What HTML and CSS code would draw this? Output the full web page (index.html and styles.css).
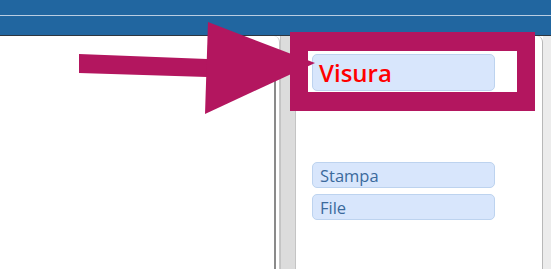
FILE: index.html
```html
<!DOCTYPE html>
<html lang="it">
<head>
  <meta charset="UTF-8" />
  <meta name="viewport" content="width=device-width, initial-scale=1.0"/>
  <title>Visura</title>
  <link rel="stylesheet" href="styles.css">
</head>
<body>
  <div class="header">
    <div class="header-top"></div>
    <div class="header-bottom"></div>
  </div>

  <div class="main">
    <div class="left-panel">
      <div class="scroll-line"></div>
    </div>
    <div class="side-strip"></div>
    <div class="right-panel">
      <button class="btn btn-big">Visura</button>
      <div class="btn-list">
        <button class="btn">Stampa</button>
        <button class="btn">File</button>
      </div>
    </div>
    <div class="edge"></div>
  </div>

  <svg class="annotation" width="551" height="269" viewBox="0 0 551 269">
    <polygon points="79,54 207,59 207,77 79,73" />
    <polygon points="208,22 315,63 205,114" />
    <path fill-rule="evenodd" d="M290 32 H535 V111 H290 Z M308 51 V92 H517 V51 Z" />
  </svg>
</body>
</html>
```

FILE: styles.css
```css
body {
  margin: 0;
  width: 551px;
  height: 269px;
  overflow: hidden;
  position: relative;
  font-family: "Open Sans", Arial, sans-serif;
  background: #fff;
}
.header {
  height: 35px;
  background: #2166a0;
  border-bottom: 1px solid #2d3640;
  display: flex;
  flex-direction: column;
}
.header-top {
  height: 15px;
  border-bottom: 1px solid #b9cde2;
}
.header-bottom {
  flex: 1;
}
.main {
  display: flex;
  height: 233px;
}
.left-panel {
  width: 280px;
  background: #fff;
  border-right: 1px solid #c8c8c8;
  border-top-right-radius: 6px;
  display: flex;
  justify-content: flex-end;
  padding-top: 16px;
  box-sizing: border-box;
}
.scroll-line {
  width: 2px;
  margin-right: 3px;
  background: #8a8a8a;
}
.side-strip {
  width: 14px;
  background: #dcdcdc;
  border-left: 1px solid #c4c4c4;
  border-right: 1px solid #c4c4c4;
}
.right-panel {
  width: 247px;
  background: #fff;
  border-right: 1px solid #b8b8b8;
  border-top-right-radius: 6px;
  padding: 18px 0 0 16px;
  box-sizing: border-box;
}
.edge {
  flex: 1;
  background: #ececec;
}
.btn {
  display: block;
  width: 183px;
  height: 26px;
  padding: 0 0 0 7px;
  text-align: left;
  background: #d8e6fc;
  border: 1px solid #bdd3ef;
  border-radius: 5px;
  font-family: "Open Sans", Arial, sans-serif;
  font-size: 16.5px;
  color: #3b6a9c;
}
.btn-big {
  height: 37px;
  font-size: 24px;
  font-weight: 600;
  color: #ff0000;
  padding-left: 6px;
}
.btn-list {
  margin-top: 71px;
  display: flex;
  flex-direction: column;
  gap: 6px;
}
.annotation {
  position: absolute;
  left: 0;
  top: 0;
  fill: #b3165f;
}
```
